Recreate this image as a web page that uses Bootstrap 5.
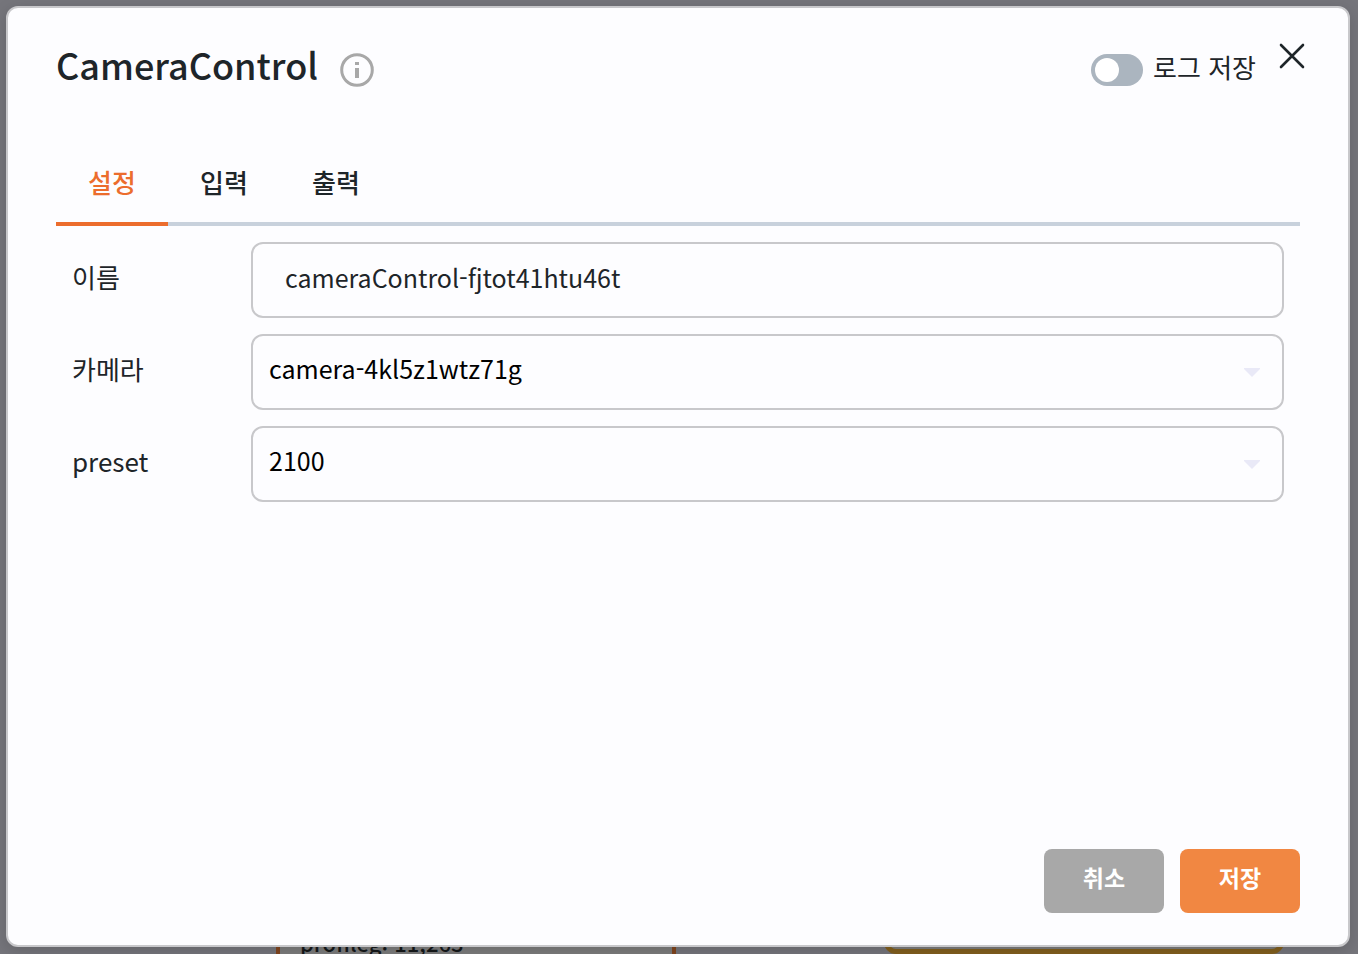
<!DOCTYPE html>
<html lang="ko">
<head>
<meta charset="utf-8">
<meta name="viewport" content="width=device-width, initial-scale=1">
<title>CameraControl</title>
<link rel="stylesheet" href="https://cdn.jsdelivr.net/npm/bootstrap@5.3.0/dist/css/bootstrap.min.css">
<style>
  body { font-family: "Noto Sans CJK KR", sans-serif; font-size: 26px; line-height: 40px; color: #1e2529; background: #75757b; }
  .flow-canvas { position: absolute; inset: 0; overflow: hidden; }
  .flow-node { position: absolute; bottom: -20px; height: 120px; background: #7c7c7c; }
  .node-profile { left: 276px; width: 400px; border: 4px solid #80451e; padding: 68px 20px 0; color: #15181a; font-size: 22px; line-height: 32px; font-weight: 500; }
  .node-output { left: 884px; bottom: 0; width: 400px; border: 5px solid #825f1e; border-radius: 12px; }
  .settings-dialog { margin: 6px 8px 7px 6px; background: #fdfdff; border: 2px solid #c8c8cb; border-radius: 12px; box-shadow: 0 4px 16px rgba(0,0,0,.15); }
  .dialog-top { padding: 28px 40px 0 48px; height: 136px; }
  .dialog-title { font-size: 36px; line-height: 56px; font-weight: 500; }
  .title-info { margin: 8px 0 0 19px; }
  .log-switch { min-height: 0; padding: 0; margin: 11px 20px 0 0; gap: 10px; }
  .log-switch .form-check-input { float: none; width: 52px; height: 32px; margin: 6px 0 0; border: 0; background-color: #abb5bf; background-size: 32px; background-position: left center; --bs-form-switch-bg: url("data:image/svg+xml,%3csvg xmlns='http://www.w3.org/2000/svg' viewBox='-4 -4 8 8'%3e%3ccircle r='3' fill='%23fff'/%3e%3c/svg%3e"); }
  .log-switch .form-check-input:checked { background-color: #ec6d2d; background-position: right center; }
  .dialog-close { width: 32px; height: 32px; margin-top: 4px; color: #1e2529; line-height: 0; }
  .dialog-tabs { margin: 0 48px; border-bottom: 4px solid #c8d1dc; }
  .dialog-tabs .nav-link { min-width: 112px; padding: 18px 32px 20px; margin-bottom: -4px; border: 0; border-bottom: 4px solid transparent; border-radius: 0; background: none; color: #1e2529; font-weight: 500; }
  .dialog-tabs .nav-link.active { color: #ec6d2d; border-color: #ec6d2d; }
  .dialog-fields { padding: 16px 64px; }
  .field-row { display: grid; grid-template-columns: 179px 1fr; }
  .field-row label { padding-top: 15px; }
  .field-row .form-control, .field-row .form-select { height: 76px; border: 2px solid #c8c8cb; border-radius: 12px; background-color: #fdfdff; font-size: 25px; line-height: 40px; }
  .field-row .form-control { padding: 13px 32px 19px; color: #1e2529; }
  .field-row .form-select { padding: 12px 56px 20px 16px; color: #000; background-position: right 21px top 32px; background-size: 18px 10px; background-image: url("data:image/svg+xml,%3csvg xmlns='http://www.w3.org/2000/svg' viewBox='0 0 18 10'%3e%3cpath fill='%23e9e9f7' d='M1 0h16v1L9 9 1 1z'/%3e%3c/svg%3e"); }
  .dialog-actions { padding: 0 48px 32px; }
  .dialog-actions .btn { width: 120px; height: 64px; padding: 8px 0 16px; border: 0; border-radius: 8px; font-size: 23px; font-weight: 700; line-height: 40px; color: #fff; }
  .btn-dismiss { background: #a8a8a8; }
  .btn-save { background: #f18742; }
</style>
</head>
<body class="min-vh-100 d-flex position-relative">
  <div class="flow-canvas" aria-hidden="true">
    <div class="flow-node node-profile">profileg: 11,263</div>
    <div class="flow-node node-output"></div>
  </div>

  <main class="settings-dialog flex-fill d-flex flex-column position-relative" role="dialog" aria-labelledby="dialogTitle">
    <header class="dialog-top d-flex align-items-start">
      <h1 class="dialog-title mb-0" id="dialogTitle">CameraControl</h1>
      <svg class="title-info" width="40" height="44" viewBox="0 0 40 44" fill="none" aria-label="정보">
        <circle cx="20" cy="26" r="15.3" stroke="#a8a8a8" stroke-width="3"/>
        <path fill="#a8a8a8" d="M18 18h4v3h-4zM18 24h4v10h-4z"/>
      </svg>
      <div class="ms-auto d-flex align-items-start">
        <div class="form-check form-switch log-switch d-flex align-items-center">
          <input class="form-check-input" type="checkbox" role="switch" id="logSave">
          <label class="form-check-label" for="logSave">로그 저장</label>
        </div>
        <button type="button" class="btn dialog-close p-0 border-0" aria-label="닫기">
          <svg width="32" height="32" viewBox="0 0 32 32" fill="none" stroke="currentColor" stroke-width="2.6" stroke-linecap="round"><path d="M5 5l22 22M27 5L5 27"/></svg>
        </button>
      </div>
    </header>

    <ul class="nav dialog-tabs" role="tablist">
      <li class="nav-item"><button class="nav-link active" type="button" role="tab" aria-selected="true">설정</button></li>
      <li class="nav-item"><button class="nav-link" type="button" role="tab">입력</button></li>
      <li class="nav-item"><button class="nav-link" type="button" role="tab">출력</button></li>
    </ul>

    <form class="dialog-fields d-grid gap-3">
      <div class="field-row">
        <label for="nodeName">이름</label>
        <input class="form-control" id="nodeName" type="text" value="cameraControl-fjtot41htu46t">
      </div>
      <div class="field-row">
        <label for="camera">카메라</label>
        <select class="form-select" id="camera"><option>camera-4kl5z1wtz71g</option></select>
      </div>
      <div class="field-row">
        <label for="preset">preset</label>
        <select class="form-select" id="preset"><option>2100</option></select>
      </div>
    </form>

    <footer class="dialog-actions d-flex justify-content-end gap-3 mt-auto">
      <button type="button" class="btn btn-dismiss">취소</button>
      <button type="button" class="btn btn-save">저장</button>
    </footer>
  </main>
<script src="https://cdn.jsdelivr.net/npm/bootstrap@5.3.0/dist/js/bootstrap.bundle.min.js"></script>
</body>
</html>
